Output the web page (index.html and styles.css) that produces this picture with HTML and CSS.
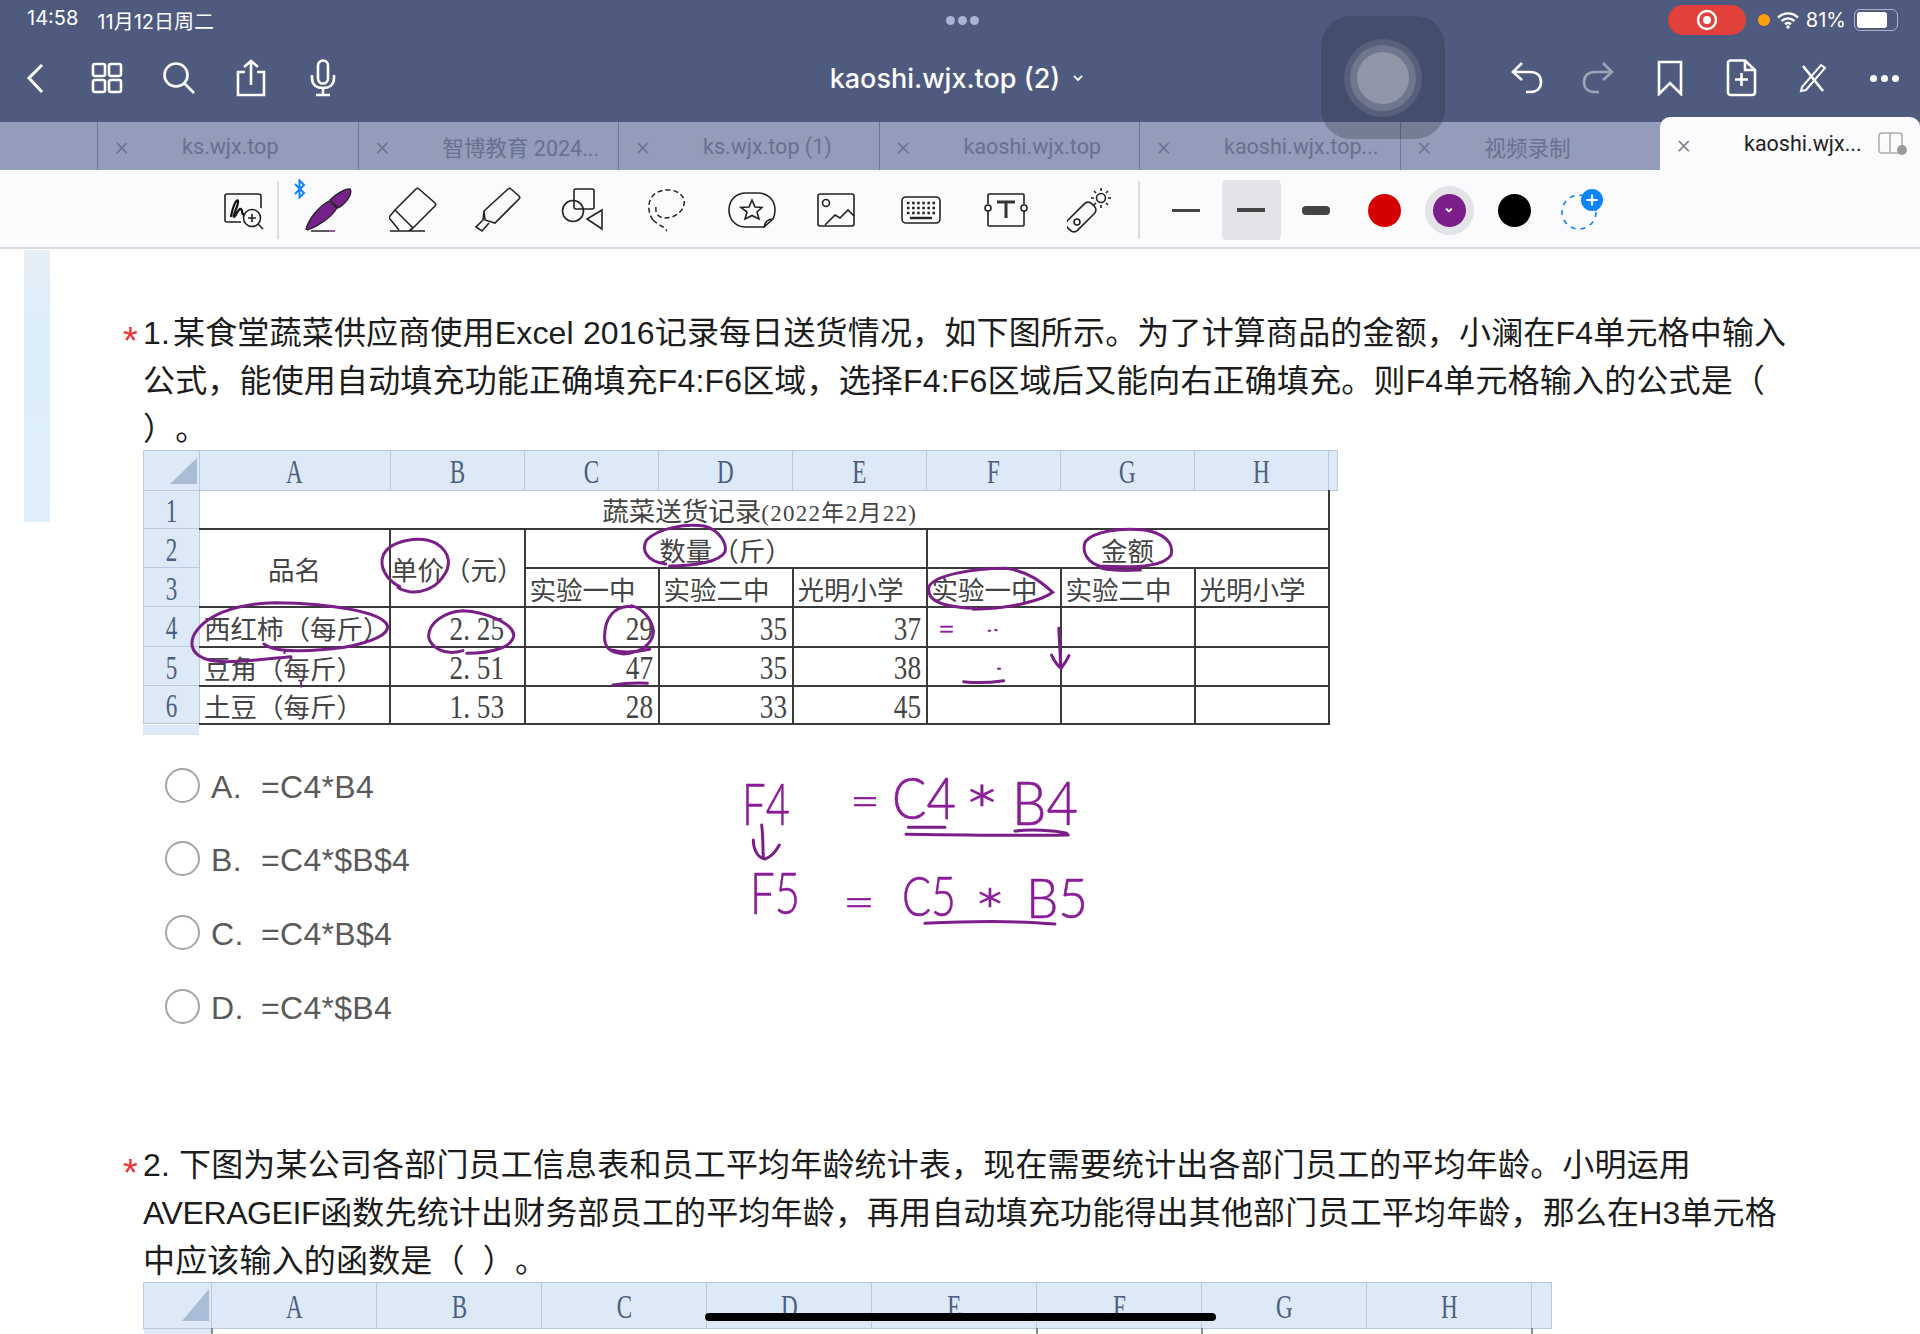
FILE: index.html
```html
<!DOCTYPE html>
<html lang="zh-CN">
<head>
  <meta charset="UTF-8">
  <meta name="viewport" content="width=device-width, initial-scale=1.0">
  <title>kaoshi.wjx.top (2)</title>
  <link rel="stylesheet" href="styles.css">
</head>
<body>
<div class="app">
  <!-- Header: status bar and navigation -->
  <header class="header">
    <div class="status">
      <div class="status-left"><span>14:58</span><span>11月12日周二</span></div>
      <div class="status-dots"><i></i><i></i><i></i></div>
      <div class="status-right">
        <div class="rec"><svg width="22" height="22" viewBox="0 0 22 22"><circle cx="11" cy="11" r="9" fill="none" stroke="#fff" stroke-width="2.4"/><circle cx="11" cy="11" r="4" fill="#fff"/></svg></div>
        <i class="orange-dot"></i>
        <svg class="wifi" width="22" height="18" viewBox="0 0 22 18"><path d="M1 6.5C7 1 15 1 21 6.5M4.5 10C8.500 6.500 13.500 6.500 17.500 10M8 13.200C10 11.700 12 11.700 14 13.200" fill="none" stroke="#fff" stroke-width="2.400"/><circle cx="11" cy="16" r="1.800" fill="#fff"/></svg>
        <span class="battery-text">81%</span>
        <div class="battery"><b></b></div>
      </div>
    </div>
    <nav class="nav">
      <div class="nav-group">
        <span class="nav-btn"><svg width="30" height="40" viewBox="0 0 30 40"><path d="M21 7L8 20L21 34" class="ico"/></svg></span>
        <span class="nav-btn"><svg width="32" height="32" viewBox="0 0 32 32"><rect x="2" y="2" width="12" height="12" rx="2" class="ico-thin"/><rect x="18" y="2" width="12" height="12" rx="2" class="ico-thin"/><rect x="2" y="18" width="12" height="12" rx="2" class="ico-thin"/><rect x="18" y="18" width="12" height="12" rx="2" class="ico-thin"/></svg></span>
        <span class="nav-btn"><svg width="34" height="34" viewBox="0 0 34 34"><circle cx="14" cy="14" r="11.500" class="ico-thin"/><path d="M22.500 22.500L32 32" class="ico-thin"/></svg></span>
        <span class="nav-btn"><svg width="32" height="38" viewBox="0 0 32 38"><path d="M10 13H3V36H29V13H22M16 26V2M9 8L16 2L23 8" class="ico-thin"/></svg></span>
        <span class="nav-btn"><svg width="26" height="38" viewBox="0 0 26 38"><rect x="8" y="1.500" width="10" height="23" rx="5" class="ico-thin"/><path d="M2 16V19C2 26 7 29 13 29C19 29 24 26 24 19V16M13 29V35M6 36H20" class="ico-thin"/></svg></span>
      </div>
      <div class="nav-title">kaoshi.wjx.top (2)<svg width="12" height="8" viewBox="0 0 12 8"><path d="M2 2L6 6L10 2" fill="none" stroke="#fff" stroke-width="1.800"/></svg></div>
      <div class="nav-group nav-right">
        <span class="nav-btn"><svg width="32" height="32" viewBox="0 0 32 32"><path d="M11 1L2 10L11 18M3 10H19C26 10 30 14 30 20C30 26 26 30 19 30H15" class="ico-thin"/></svg></span>
        <span class="nav-btn dim"><svg width="32" height="32" viewBox="0 0 32 32"><path d="M21 1L30 10L21 18M29 10H13C6 10 2 14 2 20C2 26 6 30 13 30H17" class="ico-thin"/></svg></span>
        <span class="nav-btn"><svg width="28" height="36" viewBox="0 0 28 36"><path d="M3 2H25V34L14 23L3 34Z" class="ico-thin"/></svg></span>
        <span class="nav-btn"><svg width="32" height="38" viewBox="0 0 32 38"><path d="M3 4C3 2.500 4 1.500 5.500 1.500H20L30 11V33C30 35 29 36 27 36H5.500C4 36 3 35 3 33ZM20 1.500V11H30M16.500 14V27M10 20.500H23" class="ico-thin"/></svg></span>
        <span class="nav-btn"><svg width="28" height="30" viewBox="0 0 28 30"><path d="M4 3L24 28" class="ico-thin"/><path d="M22 2L26 5L7 27L2 28L3 24Z" fill="none" stroke="#fff" stroke-width="2"/></svg></span>
        <span class="nav-btn"><i class="more-dot"></i><i class="more-dot"></i><i class="more-dot"></i></span>
      </div>
    </nav>
  </header>

  <!-- Tabs -->
  <div class="tabs">
    <div class="tab-blank"></div>
    <div class="tab"><span class="tab-x">×</span><span>ks.wjx.top</span></div>
    <div class="tab"><span class="tab-x">×</span><span>智博教育 2024...</span></div>
    <div class="tab"><span class="tab-x">×</span><span>ks.wjx.top (1)</span></div>
    <div class="tab"><span class="tab-x">×</span><span>kaoshi.wjx.top</span></div>
    <div class="tab"><span class="tab-x">×</span><span>kaoshi.wjx.top...</span></div>
    <div class="tab"><span class="tab-x">×</span><span>视频录制</span></div>
    <div class="tab active"><span class="tab-x">×</span><span>kaoshi.wjx...</span>
      <svg class="tab-split" width="30" height="24" viewBox="0 0 30 24"><rect x="1" y="1" width="23" height="20" rx="3" fill="none" stroke="#aaa" stroke-width="1.500"/><path d="M12 1V21" stroke="#aaa" stroke-width="1.500"/><circle cx="24" cy="18" r="5" fill="#999"/></svg>
    </div>
  </div>

  <!-- Pen toolbar -->
  <div class="toolbar">
    <span class="tool tool-first"><svg width="40" height="37" viewBox="0 0 40 37"><path d="M17 29H3C2 29 1 28 1 27V3C1 2 2 1 3 1H34C36 1 37 2 37 3V15" class="line"/><path d="M7 24C9 12 13 5 14 8C15 12 8 23 10 24C12 24 14 15 17 16C19 17 17 23 21 21" fill="none" stroke="#111" stroke-width="2.200"/><circle cx="28" cy="25" r="8.500" class="line"/><path d="M24 25H32M28 21V29M34 31L39 36" class="line"/></svg></span>
    <i class="tool-sep"></i>
    <span class="tool tool-pen">
      <svg class="bt" width="12" height="20" viewBox="0 0 12 20"><path d="M1 5L10 14L5.500 18.500V1.500L10 6L1 15" fill="none" stroke="#0a84ff" stroke-width="2"/></svg>
      <svg width="48" height="44" viewBox="0 0 48 44"><path d="M1 41C4 31 13 19 24 13L32 20C26 30 13 38 3 42Z" fill="#76228a" stroke="#222" stroke-width="1.300"/><path d="M25 12C31 6 41 0 45 1C48 5 42 15 33 20Z" fill="#76228a" stroke="#222" stroke-width="1.300"/><path d="M6 43H24" stroke="#222" stroke-width="1.500"/><path d="M24 43H30" stroke="#76228a" stroke-width="1.500"/></svg>
    </span>
    <span class="tool"><svg width="48" height="46" viewBox="0 0 48 46"><path d="M6 23L27 2C28 1 29 1 30 2L46 16C47 17 47 18 46 19L24 41M6 23L24 41M6 23L1 29C0 30 0 31 1 32L10 43M24 41L20 44M1 44H36" class="line"/></svg></span>
    <span class="tool"><svg width="46" height="46" viewBox="0 0 46 46"><path d="M9 24L33 2C34 1 35 1 36 2L44 9C45 10 45 11 44 12L20 36L10 33ZM9 24L8 33L1 40L7 44L14 36" class="line"/></svg></span>
    <span class="tool"><svg width="44" height="44" viewBox="0 0 44 44"><rect x="13" y="1" width="20" height="20" rx="2" class="line"/><circle cx="12" cy="23" r="10.500" class="line"/><path d="M41 22V41L26 31Z" class="line"/></svg></span>
    <span class="tool"><svg width="38" height="44" viewBox="0 0 38 44"><path d="M5 32C-1 24 -1 11 8 5C18 -1 32 2 36 11C38 21 29 30 17 30C11 30 7 26 8 19M5 32C8 35 12 37 15 39C17 40 18 42 19 43" fill="none" stroke="#222" stroke-width="1.500" stroke-dasharray="5 3"/></svg></span>
    <span class="tool"><svg width="48" height="36" viewBox="0 0 48 36"><path d="M36 35H18C8 35 1 28 1 18C1 8 8 1 18 1H30C40 1 47 8 47 18C47 22 46 25 45 27L36 35C37 30 39 27 45 27" class="line"/><path d="M24 8L27 15L34 15.500L29 20L31 27L24 23.500L17 27L19 20L13 15.500L21 15Z" class="line"/></svg></span>
    <span class="tool"><svg width="38" height="34" viewBox="0 0 38 34"><rect x="1" y="1" width="36" height="32" rx="2" class="line"/><circle cx="9" cy="10" r="3.500" class="line"/><path d="M8 32L18 22L23 25L31 17L37 23" class="line"/></svg></span>
    <span class="tool"><svg width="40" height="28" viewBox="0 0 40 28"><rect x="1" y="1" width="38" height="26" rx="4" class="line"/><path d="M6 7H34M6 12H34M6 17H34" stroke="#222" stroke-width="2.500" stroke-dasharray="2.500 2.600"/><path d="M9 22H31" stroke="#222" stroke-width="2.400"/></svg></span>
    <span class="tool"><svg width="44" height="34" viewBox="0 0 44 34"><path d="M4 11V2C4 1.500 4.500 1 5 1H39C39.500 1 40 1.500 40 2V11M40 18V32C40 32.500 39.500 33 39 33H5C4.500 33 4 32.500 4 32V18" class="line"/><circle cx="4" cy="15" r="3" class="line"/><circle cx="40" cy="15" r="3" class="line"/><path d="M13 9H31M22 9V25" stroke="#333" stroke-width="3" fill="none"/></svg></span>
    <span class="tool"><svg width="46" height="46" viewBox="0 0 46 46"><rect x="-7" y="-17" width="14" height="34" rx="5" transform="translate(14 30) rotate(45)" class="line"/><circle cx="10" cy="35" r="3" class="line"/><circle cx="34" cy="11" r="4.500" class="line"/><path d="M34 1V4M34 18V21M24 11H27M41 11H44M27 4L29 6M39 16L41 18M41 4L39 6M27 18L29 16" class="line"/></svg></span>
    <i class="tool-sep tool-sep-2"></i>
    <span class="opt"><i class="stroke stroke-thin"></i></span>
    <span class="opt selected"><i class="stroke stroke-mid"></i></span>
    <span class="opt"><i class="stroke stroke-thick"></i></span>
    <span class="opt opt-color"><i class="swatch red"></i></span>
    <span class="opt opt-color"><b class="halo"><i class="swatch purple">⌄</i></b></span>
    <span class="opt opt-color"><i class="swatch black"></i></span>
    <span class="opt opt-add"><svg width="46" height="46" viewBox="0 0 46 46"><circle cx="20" cy="25" r="17" fill="none" stroke="#0a84ff" stroke-width="1.600" stroke-dasharray="5 5"/><circle cx="33" cy="13" r="11" fill="#0a84ff"/><path d="M27.500 13H38.500M33 7.500V18.500" stroke="#fff" stroke-width="2.200"/></svg></span>
  </div>

  <!-- Questions -->
  <main class="content">
    <div class="question">
      <p class="q-title"><span class="star">*</span><span class="q-num">1.</span>某食堂蔬菜供应商使用Excel 2016记录每日送货情况，如下图所示。为了计算商品的金额，小澜在F4单元格中输入<br>公式，能使用自动填充功能正确填充F4:F6区域，选择F4:F6区域后又能向右正确填充。则F4单元格输入的公式是（<br>）。</p>
      <table class="sheet sheet-one">
        <colgroup><col class="c-row"><col class="c-a"><col class="c-b"><col class="c-n"><col class="c-n"><col class="c-n"><col class="c-n"><col class="c-n"><col class="c-n"><col class="c-end"></colgroup>
        <tr class="head"><th class="corner"><svg width="30" height="28" viewBox="0 0 30 28"><path d="M28 1V27H1Z" fill="#a9bcd6"/></svg></th><th><span>A</span></th><th><span>B</span></th><th><span>C</span></th><th><span>D</span></th><th><span>E</span></th><th><span>F</span></th><th><span>G</span></th><th><span>H</span></th><th></th></tr>
        <tr class="r38 first-row"><th class="row"><span>1</span></th><td colspan="8" class="center title">蔬菜送货记录<small>(2022年2月22)</small></td></tr>
        <tr class="r39"><th class="row"><span>2</span></th><td rowspan="2" class="center">品名</td><td rowspan="2" class="center">单价（元）</td><td colspan="3" class="center">数量（斤）</td><td colspan="3" class="center">金额</td></tr>
        <tr class="r39"><th class="row"><span>3</span></th><td>实验一中</td><td>实验二中</td><td>光明小学</td><td>实验一中</td><td>实验二中</td><td>光明小学</td></tr>
        <tr class="r40"><th class="row"><span>4</span></th><td>西红柿（每斤）</td><td class="num price"><span>2. 25</span></td><td class="num"><span>29</span></td><td class="num"><span>35</span></td><td class="num"><span>37</span></td><td></td><td></td><td></td></tr>
        <tr class="r39"><th class="row"><span>5</span></th><td>豆角（每斤）</td><td class="num price"><span>2. 51</span></td><td class="num"><span>47</span></td><td class="num"><span>35</span></td><td class="num"><span>38</span></td><td></td><td></td><td></td></tr>
        <tr class="r38"><th class="row"><span>6</span></th><td>土豆（每斤）</td><td class="num price"><span>1. 53</span></td><td class="num"><span>28</span></td><td class="num"><span>33</span></td><td class="num"><span>45</span></td><td></td><td></td><td></td></tr>
      </table>
      <i class="sheet-foot"></i>
      <ul class="options">
        <li><i class="radio"></i><span class="opt-key">A.</span><span>=C4*B4</span></li>
        <li><i class="radio"></i><span class="opt-key">B.</span><span>=C4*$B$4</span></li>
        <li><i class="radio"></i><span class="opt-key">C.</span><span>=C4*B$4</span></li>
        <li><i class="radio"></i><span class="opt-key">D.</span><span>=C4*$B4</span></li>
      </ul>
    </div>

    <div class="question question-two">
      <p class="q-title"><span class="star">*</span><span class="q-num q-num-two">2.</span>下图为某公司各部门员工信息表和员工平均年龄统计表，现在需要统计出各部门员工的平均年龄。小明运用<br><span class="q-latin">AVERAGEIF</span>函数先统计出财务部员工的平均年龄，再用自动填充功能得出其他部门员工平均年龄，那么在H3单元格<br>中应该输入的函数是（&nbsp;&nbsp;）。</p>
      <table class="sheet sheet-two">
        <colgroup><col class="c-row"><col class="c-n"><col class="c-n"><col class="c-n"><col class="c-n"><col class="c-n"><col class="c-n"><col class="c-n"><col class="c-n"><col class="c-end"></colgroup>
        <tr class="head"><th class="corner"><svg width="30" height="34" viewBox="0 0 30 34"><path d="M28 1V33H1Z" fill="#a9bcd6"/></svg></th><th><span>A</span></th><th><span>B</span></th><th><span>C</span></th><th><span>D</span></th><th><span>E</span></th><th><span>F</span></th><th><span>G</span></th><th><span>H</span></th><th></th></tr>
        <tr class="tail"><th></th><td colspan="5"></td><td></td><td colspan="2"></td></tr>
      </table>
    </div>
  </main>

  <!-- Floating button over the header -->
  <div class="assist"><i class="assist-a"></i><i class="assist-b"></i><i class="assist-c"></i></div>
  <i class="side-strip"></i>

  <!-- Pen ink over the page -->
  <svg class="ink" width="1920" height="1334" viewBox="0 0 1920 1334">
    <g transform="translate(130 440) scale(.3827 .3333)">
      <path d="M705 440C670 420 650 380 662 345C680 300 760 285 800 310C840 340 840 380 815 415C795 445 760 460 730 455C715 452 705 448 700 442"/>
      <path d="M350 612C380 640 480 635 560 622C640 605 680 580 672 555C655 515 520 490 380 488C270 490 190 530 165 590C150 640 190 665 250 665C310 665 370 655 420 650"/>
      <path d="M870 632C820 650 785 620 780 590C780 550 820 515 870 512C930 515 1000 550 1003 585C1000 620 950 640 880 640"/>
      <path d="M1310 500C1270 495 1240 530 1240 590C1240 620 1250 638 1290 642C1330 640 1365 615 1368 575C1365 540 1340 505 1310 497M1258 630C1290 640 1330 635 1358 628"/>
      <path d="M1262 735C1290 730 1320 728 1352 730"/>
      <path d="M1400 372C1350 365 1335 330 1350 300C1380 265 1450 250 1500 258C1540 270 1560 310 1555 335C1540 365 1480 378 1410 378"/>
      <path class="speck" d="M405 632L403 640M447 725L447 740"/>
    </g>
    <g transform="translate(720 440) scale(.4082 .3333)">
      <path d="M935 380C900 370 885 335 895 305C915 275 980 262 1040 270C1090 280 1112 310 1105 345C1090 375 1040 385 930 378M935 385C960 392 1000 392 1030 390"/>
      <path d="M620 505C540 500 505 480 512 440C525 405 620 385 700 385C760 395 790 430 815 457C790 480 720 505 620 508"/>
      <path d="M830 565L835 685M812 645C820 665 830 680 836 684C845 670 850 660 855 647"/>
      <path d="M597 725C630 730 660 728 695 722"/>
      <path class="speck" d="M658 572L662 572M674 570L678 571M681 686L686 686"/>
    </g>
    <g transform="translate(700 750) scale(.3333)">
      <path d="M185 225C190 260 188 300 190 320M160 270C160 300 175 325 195 327C215 320 230 300 238 285"/>
      <path d="M625 232L735 232M618 253C750 255 950 258 1105 255M945 243C990 238 1060 240 1100 250"/>
      <path d="M675 520C780 515 950 512 1065 522"/>
    </g>
    <text class="ink-text" x="938" y="640" font-size="34" textLength="17" lengthAdjust="spacingAndGlyphs">=</text>
    <text class="ink-text" x="742" y="825" font-size="58" textLength="48" lengthAdjust="spacingAndGlyphs">F4</text>
    <text class="ink-text" x="850" y="817" font-size="46" textLength="30" lengthAdjust="spacingAndGlyphs">=</text>
    <text class="ink-text" x="892" y="819" font-size="58" textLength="64" lengthAdjust="spacingAndGlyphs">C4</text>
    <text class="ink-text" x="964" y="838" font-size="70" textLength="36" lengthAdjust="spacingAndGlyphs">*</text>
    <text class="ink-text" x="1012" y="825" font-size="62" textLength="66" lengthAdjust="spacingAndGlyphs">B4</text>
    <text class="ink-text" x="750" y="914" font-size="58" textLength="50" lengthAdjust="spacingAndGlyphs">F5</text>
    <text class="ink-text" x="843" y="918" font-size="46" textLength="32" lengthAdjust="spacingAndGlyphs">=</text>
    <text class="ink-text" x="902" y="916" font-size="56" textLength="54" lengthAdjust="spacingAndGlyphs">C5</text>
    <text class="ink-text" x="974" y="935" font-size="64" textLength="32" lengthAdjust="spacingAndGlyphs">*</text>
    <text class="ink-text" x="1026" y="918" font-size="56" textLength="62" lengthAdjust="spacingAndGlyphs">B5</text>
  </svg>

  <i class="home-bar"></i>
</div>
</body>
</html>
```

FILE: styles.css
```css
/* Basic page */
* {
  box-sizing: border-box;
}

body {
  margin: 0;
  background-color: #fff;
  font-family: "Liberation Sans", "Noto Sans CJK SC", sans-serif;
  color: #1c1c1c;
}

i {
  display: block;
  font-style: normal;
}

.app {
  position: relative;
  width: 1920px;
  height: 1334px;
  overflow: hidden;
}

/* Header */
.header {
  height: 122px;
  background-color: #4e5a7e;
  color: #fff;
  font-family: Inter, "Noto Sans CJK SC", sans-serif;
}

.status {
  display: grid;
  grid-template-columns: 1fr auto 1fr;
  align-items: center;
  height: 38px;
  padding: 2px 22px 0 27px;
  font-size: 20px;
}

.status-left {
  display: flex;
  gap: 19px;
}

.status-dots {
  display: flex;
  gap: 3px;
}

.status-dots i {
  width: 9px;
  height: 9px;
  border-radius: 50%;
  background-color: #aab4d2;
}

.status-right {
  display: flex;
  align-items: center;
  justify-content: flex-end;
}

.rec {
  display: flex;
  align-items: center;
  justify-content: center;
  width: 78px;
  height: 30px;
  border-radius: 15px;
  background-color: #e2403a;
}

.orange-dot {
  width: 12px;
  height: 12px;
  margin: 0 7px 0 12px;
  border-radius: 50%;
  background-color: #ff9f0a;
}

.battery-text {
  margin: 0 8px 0 7px;
}

.battery {
  width: 44px;
  height: 22px;
  padding: 2px;
  border: 1.500px solid #aab1c8;
  border-radius: 6px;
}

.battery b {
  display: block;
  width: 80%;
  height: 100%;
  border-radius: 3px;
  background-color: #fff;
}

.nav {
  display: grid;
  grid-template-columns: 1fr auto 1fr;
  align-items: center;
  height: 80px;
}

.nav-group {
  display: flex;
  align-items: center;
}

.nav-right {
  justify-content: flex-end;
}

.nav-btn {
  display: flex;
  align-items: center;
  justify-content: center;
  gap: 4px;
  width: 72px;
  height: 44px;
}

.nav-right .nav-btn {
  width: 71.500px;
}

.nav-group:first-child .nav-btn:first-child {
  width: 71px;
}

.dim {
  opacity: 0.45;
}

.more-dot {
  width: 7px;
  height: 7px;
  border-radius: 50%;
  background-color: #fff;
}

.ico,
.ico-thin {
  fill: none;
  stroke: #fff;
  stroke-width: 3;
}

.ico-thin {
  stroke-width: 2.600;
}

.nav-title {
  display: flex;
  align-items: center;
  gap: 12px;
  padding-right: 6px;
  font-size: 27px;
  font-weight: 500;
}

/* Tabs */
.tabs {
  display: flex;
  height: 48px;
  background-color: #939cb8;
  font-size: 21.500px;
  color: #687190;
  font-family: Roboto, "Noto Sans CJK SC", sans-serif;
}

.tab-blank {
  width: 97px;
}

.tab {
  display: flex;
  align-items: center;
  width: 260.500px;
  padding-left: 17px;
  border-left: 1px solid #6d7796;
  white-space: nowrap;
}

.tab-x {
  width: 67px;
  font-size: 26px;
  font-weight: 300;
}

.tab.active {
  position: relative;
  z-index: 1;
  width: 260px;
  height: 53px;
  margin-top: -5px;
  border-left: 0;
  border-radius: 10px 10px 0 0;
  background-color: #fbfafc;
  color: #1f1f1f;
}

.tab.active .tab-x {
  color: #777;
}

.tab-split {
  margin-left: 16px;
}

/* Toolbar */
.toolbar {
  display: flex;
  align-items: center;
  height: 79px;
  padding: 3px 0 0 202px;
  background-color: #fbfafc;
  border-bottom: 2px solid #dcdce0;
}

.tool {
  position: relative;
  display: flex;
  flex: none;
  align-items: center;
  justify-content: center;
  width: 84.600px;
}

.tool-first {
  width: 75px;
  padding: 3px 0 0 8px;
}

.tool-sep {
  flex: none;
  width: 1.500px;
  height: 58px;
  margin-right: 8px;
  background-color: #ddd;
}

.tool-sep-2 {
  margin: 0 14px 0 6px;
}

.bt {
  position: absolute;
  top: -9px;
  left: 7px;
}

.line {
  fill: none;
  stroke: #222;
  stroke-width: 1.600;
}

.opt {
  display: flex;
  flex: none;
  align-items: center;
  justify-content: center;
  width: 65px;
  height: 60px;
}

.opt-color {
  transform: translateX(3px);
}

.opt-add {
  padding-left: 12px;
}

.selected {
  background-color: #e4e3e7;
  background-clip: content-box;
  padding: 0 3px;
  border-radius: 6px;
}

.stroke {
  width: 28px;
  background-color: #444;
}

.stroke-thin {
  height: 3px;
}

.stroke-mid {
  height: 4px;
}

.stroke-thick {
  height: 9px;
  border-radius: 4px;
}

.swatch {
  width: 33px;
  height: 33px;
  border-radius: 50%;
  text-align: center;
  font-size: 14px;
  line-height: 26px;
  color: #fff;
}

.red {
  background-color: #d40000;
}

.purple {
  background-color: #7c1f8b;
}

.black {
  background-color: #000;
}

.halo {
  display: flex;
  align-items: center;
  justify-content: center;
  width: 49px;
  height: 49px;
  border-radius: 50%;
  background-color: #e4e3e7;
}

/* Questions */
.content {
  padding: 60px 0 0 143px;
}

.q-title {
  margin: 0;
  font-size: 32px;
  line-height: 48px;
  letter-spacing: 0.17px;
  white-space: nowrap;
  text-spacing-trim: space-all;
}

.q-num {
  margin-right: 3px;
}

.q-num-two {
  margin-right: 9px;
}

.q-latin {
  letter-spacing: -0.4px;
}

.star {
  position: relative;
  top: 10px;
  display: inline-block;
  width: 18px;
  margin-left: -20px;
  margin-right: 2px;
  font-size: 38px;
  line-height: 0;
  color: #e33;
}

.question-two {
  margin-top: 96px;
}

/* Excel picture */
.sheet {
  table-layout: fixed;
  border-collapse: collapse;
  font-family: "Liberation Serif", "Noto Sans CJK SC", serif;
  font-size: 26.500px;
  color: #444;
}

.sheet-one {
  width: 1194px;
  margin-top: -3px;
}

.sheet-two {
  width: 1408px;
  margin-top: -3px;
}

.c-row {
  width: 56px;
}

.c-a {
  width: 190.500px;
}

.c-b {
  width: 134.500px;
}

.c-n {
  width: 134px;
}

.c-end {
  width: 9px;
}

.sheet-two .c-row {
  width: 68px;
}

.sheet-two .c-n {
  width: 165px;
}

.sheet-two .c-end {
  width: 20px;
}

.sheet th {
  padding: 3px 0 0;
  background-color: #dde9f6;
  font-weight: 400;
  color: #4a5f80;
  font-size: 34px;
  line-height: 1;
  border: 1px solid #b9c9de;
}

.sheet .head {
  height: 40px;
}

.sheet-two .head {
  height: 46px;
}

.sheet th span {
  display: inline-block;
  transform: scaleX(0.68);
}

.sheet .corner {
  padding: 0;
  line-height: 0;
  text-align: right;
}

.r38 {
  height: 38px;
}

.r39 {
  height: 39px;
}

.r40 {
  height: 40px;
}

.sheet td {
  padding: 8px 4px 0;
  border: 2px solid #3a3a3a;
  line-height: 1;
  white-space: nowrap;
}

.sheet th.row + td {
  border-left: 0;
}

.first-row td {
  border-top: 0;
}

.sheet .center {
  padding-left: 0;
  padding-right: 0;
  text-align: center;
}

.sheet .title {
  padding: 5px 8px 0 0;
}

.sheet .num {
  padding: 5px 5px 0 0;
  text-align: right;
  font-size: 34px;
  line-height: 0.85;
}

.sheet .price {
  padding-right: 20px;
}

.num span {
  display: inline-block;
  transform: scaleX(0.8);
  transform-origin: right;
}

.title small {
  font-size: 23px;
  letter-spacing: 1.300px;
}

.sheet-foot {
  width: 1194px;
  height: 10px;
  background: linear-gradient(to right, #dde9f6 56px, #fff 56px);
}

.sheet .tail {
  height: 12px;
}

.sheet .tail th {
  padding: 0;
  border: 0;
}

.sheet .tail td {
  padding: 0;
  border-width: 0 2px;
  border-color: #8a8a8a;
}

/* Options */
.options {
  margin: 16px 0 0;
  padding: 0 0 0 22px;
  list-style: none;
  font-size: 32px;
  letter-spacing: 0.3px;
  color: #5a5a5a;
}

.options li {
  display: flex;
  align-items: center;
  height: 73.600px;
}

.radio {
  width: 35px;
  height: 35px;
  margin: -4px 11px 0 0;
  border: 2px solid #a5a5a5;
  border-radius: 50%;
}

.opt-key {
  width: 50px;
}

/* Things lying over the page */
.assist {
  position: absolute;
  top: 16px;
  left: 1321px;
  width: 124px;
  height: 123px;
  border-radius: 30px;
  background-color: rgba(40, 45, 60, 0.28);
}

.assist i {
  position: absolute;
  border-radius: 50%;
}

.assist-a {
  top: 23px;
  left: 23px;
  width: 78px;
  height: 78px;
  background-color: rgba(255, 255, 255, 0.1);
}

.assist-b {
  top: 29px;
  left: 29px;
  width: 66px;
  height: 66px;
  background-color: rgba(255, 255, 255, 0.15);
}

.assist-c {
  top: 36px;
  left: 36px;
  width: 52px;
  height: 52px;
  background-color: #9095a8;
}

.side-strip {
  position: absolute;
  top: 250px;
  left: 24px;
  width: 26px;
  height: 272px;
  background: linear-gradient(to bottom, #e6eff6, #ddeefb 25%, #dff0fc);
}

.ink {
  position: absolute;
  top: 0;
  left: 0;
  pointer-events: none;
}

.ink path {
  fill: none;
  stroke: #7b1f88;
  stroke-width: 3;
  stroke-linecap: round;
  vector-effect: non-scaling-stroke;
}

.ink .speck {
  stroke-width: 2;
}

.ink-text {
  fill: #8a1c98;
  stroke: #8a1c98;
  stroke-width: 0.6;
  font-family: Lato, sans-serif;
  font-weight: 300;
}

.home-bar {
  position: absolute;
  top: 1313px;
  left: 705px;
  width: 511px;
  height: 8px;
  border-radius: 4px;
  background-color: #000;
}
```
